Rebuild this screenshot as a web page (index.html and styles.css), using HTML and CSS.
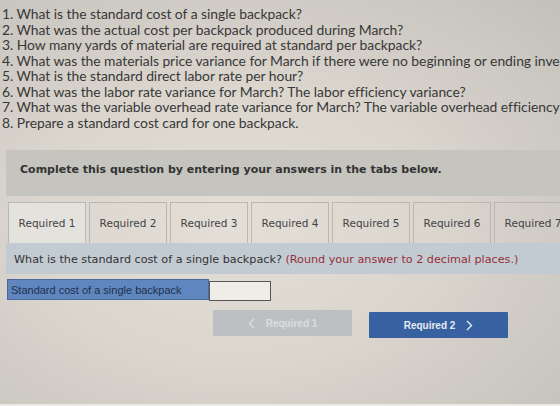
FILE: index.html
```html
<!DOCTYPE html>
<html lang="en">
<head>
  <meta charset="UTF-8">
  <title>Standard Costs</title>
  <link rel="stylesheet" href="styles.css">
</head>
<body>
  <ol class="questions">
    <li>1. What is the standard cost of a single backpack?</li>
    <li>2. What was the actual cost per backpack produced during March?</li>
    <li>3. How many yards of material are required at standard per backpack?</li>
    <li>4. What was the materials price variance for March if there were no beginning or ending inve</li>
    <li>5. What is the standard direct labor rate per hour?</li>
    <li>6. What was the labor rate variance for March? The labor efficiency variance?</li>
    <li>7. What was the variable overhead rate variance for March? The variable overhead efficiency</li>
    <li>8. Prepare a standard cost card for one backpack.</li>
  </ol>

  <div class="instructions">Complete this question by entering your answers in the tabs below.</div>

  <div class="tabs">
    <div class="tab active">Required 1</div>
    <div class="tab">Required 2</div>
    <div class="tab">Required 3</div>
    <div class="tab">Required 4</div>
    <div class="tab">Required 5</div>
    <div class="tab">Required 6</div>
    <div class="tab">Required 7</div>
  </div>

  <div class="prompt">What is the standard cost of a single backpack? <span class="hint">(Round your answer to 2 decimal places.)</span></div>

  <div class="answer-row">
    <div class="answer-label">Standard cost of a single backpack</div>
    <div class="answer-input"></div>
  </div>

  <div class="nav">
    <button class="nav-btn prev">
      <svg class="chev" width="7" height="11" viewBox="0 0 7 11"><polyline points="6,1 1.5,5.5 6,10"/></svg>
      Required 1
    </button>
    <button class="nav-btn next">
      Required 2
      <svg class="chev" width="7" height="11" viewBox="0 0 7 11"><polyline points="1,1 5.5,5.5 1,10"/></svg>
    </button>
  </div>
</body>
</html>
```

FILE: styles.css
```css
html, body {
  height: 100%;
}
body {
  margin: 0;
  overflow: hidden;
  background:
    linear-gradient(to bottom, transparent 404px, #ebeae7 404px),
    radial-gradient(ellipse at 42% 55%, #e3dfd7 0%, #dad6ce 45%, #c3bfba 100%);
  color: #333;
  font-family: "DejaVu Sans", Verdana, sans-serif;
}
.questions {
  list-style: none;
  margin: 0;
  padding: 6px 0 0 2px;
  font-family: Lato, "Open Sans", sans-serif;
  font-size: 13.9px;
  letter-spacing: -0.04px;
  line-height: 15.5px;
  color: #383838;
  white-space: nowrap;
}
.instructions {
  margin: 20px 0 0 6px;
  height: 46px;
  padding: 13px 0 0 14px;
  box-sizing: border-box;
  background: #c5c4bf;
  font-weight: bold;
  font-size: 11px;
  color: #333;
}
.tabs {
  display: flex;
  gap: 3px;
  margin: 6px 0 0 8px;
  white-space: nowrap;
}
.tab {
  flex: 0 0 78px;
  height: 41px;
  box-sizing: border-box;
  border: 1px solid #b9b7b2;
  border-bottom: none;
  padding-top: 14px;
  text-align: center;
  font-size: 10.5px;
  color: #444;
}
.tab.active {
  background: #e4e2dd;
}
.prompt {
  margin-left: 6px;
  height: 31px;
  padding: 10px 0 0 8px;
  box-sizing: border-box;
  background: #c3cbd2;
  font-size: 11.2px;
  color: #333;
  white-space: nowrap;
}
.hint {
  color: #963038;
}
.answer-row {
  display: flex;
  margin: 5px 0 0 7px;
}
.answer-label {
  width: 202px;
  height: 21px;
  box-sizing: border-box;
  padding: 4px 0 0 3px;
  background: #5f86bf;
  border: 1px solid #4a6a99;
  font-family: "Liberation Sans", Arial, sans-serif;
  font-size: 11px;
  color: #22314c;
}
.answer-input {
  width: 62px;
  height: 20px;
  margin-top: 2px;
  box-sizing: border-box;
  background: #efede8;
  border: 1px solid #555;
}
.nav {
  display: flex;
  gap: 17px;
  margin: 9px 0 0 213px;
}
.nav-btn {
  display: flex;
  align-items: center;
  justify-content: center;
  gap: 11px;
  width: 139px;
  height: 26px;
  padding: 0;
  border: none;
  border-radius: 1px;
  font-family: "Liberation Sans", Arial, sans-serif;
  font-weight: bold;
  font-size: 10px;
}
.chev polyline {
  fill: none;
  stroke: currentColor;
  stroke-width: 1.4;
}
.prev {
  background: #bcc0c3;
  color: #dadde0;
}
.next {
  margin-top: 2px;
  background: #3761a0;
  color: #e6ebf2;
}
```
